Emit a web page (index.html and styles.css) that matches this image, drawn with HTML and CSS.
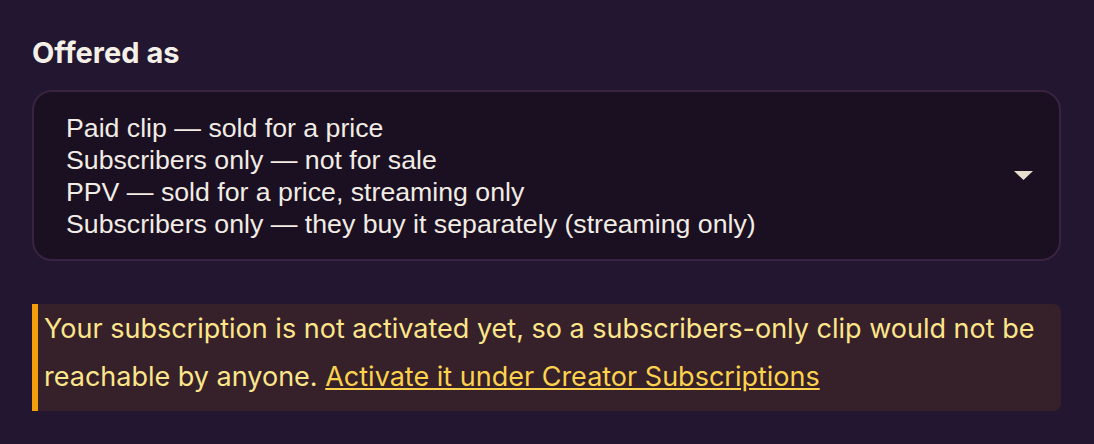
FILE: index.html
```html
<!DOCTYPE html>
<html lang="en">
<head>
<meta charset="utf-8">
<title>Offered as</title>
<link rel="stylesheet" href="styles.css">
</head>
<body>
<main class="field">
  <h2 class="field-label">Offered as</h2>
  <div class="select">
    <div class="select-options">
      <div class="option">Paid clip — sold for a price</div>
      <div class="option">Subscribers only — not for sale</div>
      <div class="option">PPV — sold for a price, streaming only</div>
      <div class="option">Subscribers only — they buy it separately (streaming only)</div>
    </div>
    <svg class="select-arrow" width="19" height="9" viewBox="0 0 19 9" aria-hidden="true"><polygon points="0,0 19,0 9.5,9" fill="#e9dfcf"/></svg>
  </div>
  <p class="warning">Your subscription is not activated yet, so a subscribers-only clip would not be reachable by anyone. <a class="warning-link" href="#">Activate it under Creator Subscriptions</a></p>
</main>
</body>
</html>
```

FILE: styles.css
```css
html, body {
  margin: 0;
  padding: 0;
}
body {
  background: #221630;
  width: 1094px;
  height: 444px;
  overflow: hidden;
}
.field {
  padding: 36px 33px 0 32px;
  display: flex;
  flex-direction: column;
}
.field-label {
  margin: 0 0 20px 0;
  font-family: Inter, "Noto Sans", sans-serif;
  font-weight: 700;
  font-size: 29px;
  line-height: 34px;
  color: #f4efe7;
}
.select {
  height: 171px;
  box-sizing: border-box;
  border: 2px solid #3a2340;
  border-radius: 20px;
  background: #1b1022;
  display: flex;
  align-items: center;
  justify-content: space-between;
  padding: 0 26px 0 32px;
}
.select-options {
  font-family: "Liberation Sans", Arial, sans-serif;
  font-size: 26.7px;
  line-height: 32px;
  color: #f1ece4;
}
.select-arrow {
  display: block;
}
.warning {
  margin: 43px 0 0 0;
  height: 107px;
  box-sizing: border-box;
  background: #36202a;
  border-left: 6px solid #f59e0b;
  border-radius: 0 8px 8px 0;
  padding: 1px 20px 0 6px;
  font-family: Inter, "Noto Sans", sans-serif;
  font-size: 27px;
  line-height: 48px;
  color: #fde68a;
}
.warning-link {
  color: #fcd34d;
  text-decoration: underline;
}
```
